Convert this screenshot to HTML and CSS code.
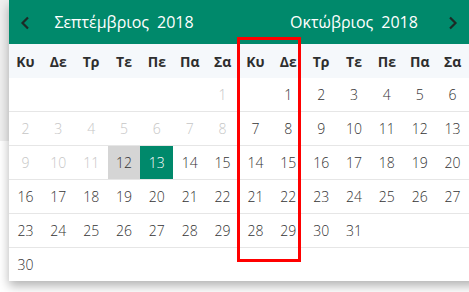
FILE: index.html
```html
<!DOCTYPE html>
<html lang="el">
<head>
<meta charset="utf-8">
<link rel="stylesheet" href="styles.css">
</head>
<body>
<div class="stage">
  <div class="picker">
    <div class="month">
      <div class="head">
        <span class="nav"><svg width="10" height="14" viewBox="0 0 10 14"><path d="M8 1.5 L2.5 7 L8 12.5" fill="none" stroke="#1c2a26" stroke-width="2.2"/></svg></span>
        <span class="title">Σεπτέμβριος<span class="year">2018</span></span>
        <span class="nav"></span>
      </div>
      <div class="wd"><span>Κυ</span><span>Δε</span><span>Τρ</span><span>Τε</span><span>Πε</span><span>Πα</span><span>Σα</span></div>
      <div class="row"><span></span><span></span><span></span><span></span><span></span><span></span><span class="off">1</span></div>
      <div class="row"><span class="off">2</span><span class="off">3</span><span class="off">4</span><span class="off">5</span><span class="off">6</span><span class="off">7</span><span class="off">8</span></div>
      <div class="row"><span class="off">9</span><span class="off">10</span><span class="off">11</span><span class="today">12</span><span class="sel">13</span><span>14</span><span>15</span></div>
      <div class="row"><span>16</span><span>17</span><span>18</span><span>19</span><span>20</span><span>21</span><span>22</span></div>
      <div class="row"><span>23</span><span>24</span><span>25</span><span>26</span><span>27</span><span>28</span><span>29</span></div>
      <div class="row last"><span>30</span><span></span><span></span><span></span><span></span><span></span><span></span></div>
    </div>
    <div class="month">
      <div class="head">
        <span class="nav"></span>
        <span class="title">Οκτώβριος<span class="year">2018</span></span>
        <span class="nav"><svg width="10" height="14" viewBox="0 0 10 14"><path d="M2 1.5 L7.5 7 L2 12.5" fill="none" stroke="#1c2a26" stroke-width="2.2"/></svg></span>
      </div>
      <div class="wd"><span>Κυ</span><span>Δε</span><span>Τρ</span><span>Τε</span><span>Πε</span><span>Πα</span><span>Σα</span></div>
      <div class="row"><span></span><span>1</span><span>2</span><span>3</span><span>4</span><span>5</span><span>6</span></div>
      <div class="row"><span>7</span><span>8</span><span>9</span><span>10</span><span>11</span><span>12</span><span>13</span></div>
      <div class="row"><span>14</span><span>15</span><span>16</span><span>17</span><span>18</span><span>19</span><span>20</span></div>
      <div class="row"><span>21</span><span>22</span><span>23</span><span>24</span><span>25</span><span>26</span><span>27</span></div>
      <div class="row"><span>28</span><span>29</span><span>30</span><span>31</span><span></span><span></span><span></span></div>
      <div class="row last"><span></span><span></span><span></span><span></span><span></span><span></span><span></span></div>
    </div>
    <div class="mark"></div>
  </div>
</div>
</body>
</html>
```
FILE: styles.css
```css
html, body {
  margin: 0;
  padding: 0;
}
body {
  width: 469px;
  height: 292px;
  overflow: hidden;
  background: #fff linear-gradient(#efefef, #efefef) no-repeat 0 0 / 9px 141px;
  font-family: "Open Sans", "Noto Sans", sans-serif;
  color: #333;
}
.stage {
  padding-left: 9px;
}
.picker {
  position: relative;
  display: flex;
  width: 470px;
  background: #fff;
  box-shadow: 0 5px 10px rgba(0, 0, 0, 0.3);
}
.month {
  width: 230px;
  flex: none;
}
.head {
  display: flex;
  align-items: center;
  height: 44px;
  background: #00896b;
  color: #fff;
}
.nav {
  width: 32px;
  flex: none;
  display: flex;
  justify-content: center;
  align-items: center;
  padding-top: 1px;
}
.title {
  flex: 1;
  text-align: center;
  font-size: 16px;
  line-height: 1;
}
.year {
  margin-left: 8px;
}
.wd, .row {
  display: grid;
  grid-template-columns: repeat(7, 1fr);
}
.wd {
  height: 34px;
  background: #f5f8fb;
  font-weight: 700;
  font-size: 14px;
  color: #2e2e2e;
}
.wd span, .row span {
  display: flex;
  align-items: center;
  justify-content: center;
}
.row {
  height: 33px;
  border-bottom: 1px solid #e6e6e6;
  font-size: 14px;
  font-weight: 300;
}
.row.last {
  border-bottom: none;
}
.off {
  color: #c6c6c6;
}
.today {
  background: #d5d5d5;
}
.sel {
  background: #00896b;
  color: #fff;
}
.mark {
  position: absolute;
  left: 228px;
  top: 37px;
  width: 58px;
  height: 219px;
  border: 3px solid #ff0000;
}
```
